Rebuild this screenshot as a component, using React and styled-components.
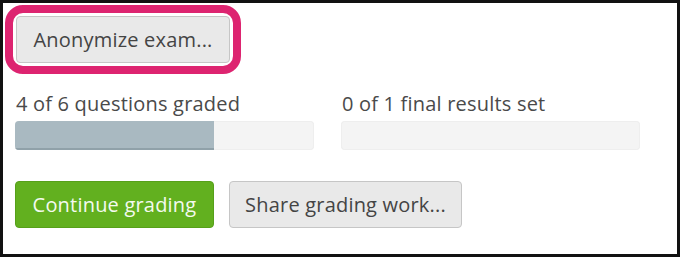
import React from 'react';
import styled, { createGlobalStyle } from 'styled-components';

const GlobalStyle = createGlobalStyle`
  body {
    margin: 0;
    background: #ffffff;
    font-family: "Open Sans", Lato, "Liberation Sans", sans-serif;
  }
`;

// Outer black frame of the screenshot
const Frame = styled.div`
  box-sizing: border-box;
  width: 680px;
  height: 257px;
  border: 3px solid #111;
  background: #fff;
  padding: 2px 0 0 2px;
`;

// Pink highlight ring round the anonymize button
const Highlight = styled.div`
  display: inline-block;
  border: 8px solid #dd2470;
  border-radius: 18px;
  padding: 3px;
`;

const Button = styled.button`
  box-sizing: border-box;
  height: 47px;
  width: ${p => p.$width}px;
  padding: 0;
  font-family: "Open Sans", Lato, "Liberation Sans", sans-serif;
  font-size: 20px;
  letter-spacing: 0.2px;
  border-radius: 4px;
  cursor: pointer;
  background: ${p => (p.$primary ? '#62b01f' : '#e9e9e9')};
  color: ${p => (p.$primary ? '#f4faef' : '#444')};
  border: 1.5px solid ${p => (p.$primary ? '#56a01a' : '#c6c6c6')};
`;

const Stats = styled.div`
  display: grid;
  grid-template-columns: 299px 299px;
  column-gap: 27px;
  margin: 17px 0 0 10px;
`;

const Stat = styled.div`
  display: flex;
  flex-direction: column;
  gap: 5px;
`;

const Label = styled.div`
  font-size: 20px;
  letter-spacing: 0.2px;
  line-height: 25px;
  color: #4a4a4a;
  padding-left: 1px;
`;

const Track = styled.div`
  height: 29px;
  border-radius: 4px;
  background: #f4f4f4;
  box-shadow: inset 0 0 0 1px #eeeeee;
  overflow: hidden;
`;

const Fill = styled.div`
  height: 100%;
  background: #a9b9c1;
  box-shadow: inset 0 -2px 0 #90a1a9;
`;

const Actions = styled.div`
  display: flex;
  gap: 15px;
  margin: 31px 0 0 10px;
`;

function Progress({ label, done, total }) {
  return (
    <Stat>
      <Label>{label}</Label>
      <Track>
        <Fill style={{ width: `${(done / total) * 100}%` }} />
      </Track>
    </Stat>
  );
}

export default function App() {
  return (
    <>
      <GlobalStyle />
      <Frame>
        <Highlight>
          <Button $width={214}>Anonymize exam...</Button>
        </Highlight>
        <Stats>
          <Progress label="4 of 6 questions graded" done={4} total={6} />
          <Progress label="0 of 1 final results set" done={0} total={1} />
        </Stats>
        <Actions>
          <Button $primary $width={199}>Continue grading</Button>
          <Button $width={233}>Share grading work...</Button>
        </Actions>
      </Frame>
    </>
  );
}
